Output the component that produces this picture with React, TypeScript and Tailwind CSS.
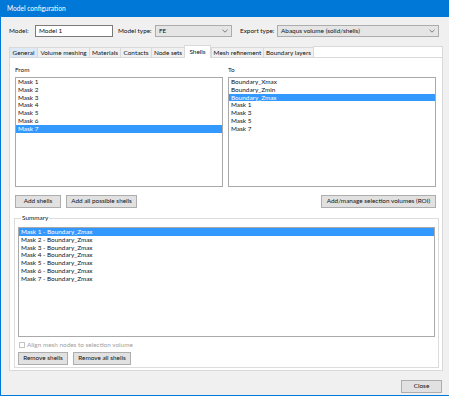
const fromItems = ['Mask 1', 'Mask 2', 'Mask 3', 'Mask 4', 'Mask 5', 'Mask 6', 'Mask 7'];
const toItems = ['Boundary_Xmax', 'Boundary_Zmin', 'Boundary_Zmax', 'Mask 1', 'Mask 3', 'Mask 5', 'Mask 7'];
const summaryItems = [1, 2, 3, 4, 5, 6, 7].map((n) => `Mask ${n} - Boundary_Zmax`);

const tabs = [
  { label: 'General', w: 'w-[28px]' },
  { label: 'Volume meshing', w: 'w-[52px]' },
  { label: 'Materials', w: 'w-[31px]' },
  { label: 'Contacts', w: 'w-[31px]' },
  { label: 'Node sets', w: 'w-[33px]' },
  { label: 'Shells', w: 'w-[27px]' },
  { label: 'Mesh refinement', w: 'w-[52px]' },
  { label: 'Boundary layers', w: 'w-[50px]' }
];

function Chevron() {
  return (
    <svg width="6" height="4" viewBox="0 0 6 4" className="shrink-0">
      <polyline points="0.5,0.8 3,3.2 5.5,0.8" fill="none" stroke="#606060" strokeWidth="0.8" />
    </svg>
  );
}

function ListBox({ items, selected, className }: { items: string[]; selected: number; className: string }) {
  return (
    <div className={`bg-white border border-[#a9a9a9] overflow-hidden ${className}`}>
      {items.map((item, index) => (
        <div
          key={index}
          className={`h-[7.8px] leading-[7.8px] pl-[2px] whitespace-nowrap ${index === selected ? 'bg-[#3399ff] text-white' : 'text-[#111]'}`}
        >
          {item}
        </div>
      ))}
    </div>
  );
}

function Button({ label, className }: { label: string; className: string }) {
  return (
    <button className={`h-[13px] bg-[#e1e1e1] border border-[#adadad] text-[#111] leading-none flex items-center justify-center whitespace-nowrap ${className}`}>
      {label}
    </button>
  );
}

export default function App() {
  return (
    <div className="w-[449px] h-[398px] bg-white font-['Lato',sans-serif] text-[6.4px] text-[#111]">
      <div className="h-[396px] bg-[#f0f0f0] border-l border-b border-[#0078d7] flex flex-col">
        {/* title bar */}
        <div className="h-[17px] bg-[#0078d7] text-white text-[6.6px] flex items-center pl-[6px]">Model configuration</div>

        {/* model row */}
        <div className="flex items-center h-[12px] mt-[8px]">
          <span className="ml-[8px] w-[26px]">Model:</span>
          <div className="w-[78px] h-[12px] bg-white border border-[#7a7a7a] flex items-center pl-[3px]">Model 1</div>
          <span className="ml-[5px] w-[37px]">Model type:</span>
          <div className="w-[77px] h-[12px] bg-[#e5e5e5] border border-[#acacac] flex items-center justify-between pl-[3px] pr-[3px]">
            <span>FE</span>
            <Chevron />
          </div>
          <span className="ml-[8px] w-[37px]">Export type:</span>
          <div className="w-[162px] h-[12px] bg-[#e5e5e5] border border-[#acacac] flex items-center justify-between pl-[3px] pr-[3px]">
            <span>Abaqus volume (solid/shells)</span>
            <Chevron />
          </div>
        </div>

        {/* tabs */}
        <div className="flex items-end h-[12px] mt-[8px] ml-[8px] w-[434px]">
          {tabs.map((tab) =>
            tab.label === 'Shells' ? (
              <div
                key={tab.label}
                className={`${tab.w} h-[13px] -mb-px relative z-10 bg-white border border-b-0 border-[#d9d9d9] flex items-center justify-center whitespace-nowrap`}
              >
                {tab.label}
              </div>
            ) : (
              <div
                key={tab.label}
                className={`${tab.w} h-[10px] border border-b-0 border-r-0 border-[#d9d9d9] flex items-center justify-center whitespace-nowrap ${tab.label === 'General' ? 'bg-[#dde9f5]' : 'bg-[#f0f0f0]'}`}
              >
                {tab.label}
              </div>
            )
          )}
          <div className="flex-1 h-[11px] bg-white border-t border-r border-l border-[#d9d9d9]"></div>
        </div>

        {/* tab page */}
        <div className="ml-[8px] w-[434px] h-[314px] bg-white border border-[#d9d9d9] flex flex-col px-[5px] pt-[8px]">
          <div className="flex gap-[5px]">
            <div className="flex flex-col">
              <span className="leading-[8px] h-[8px] mb-[3px]">From</span>
              <ListBox items={fromItems} selected={6} className="w-[208px] h-[110px]" />
            </div>
            <div className="flex flex-col">
              <span className="leading-[8px] h-[8px] mb-[3px]">To</span>
              <ListBox items={toItems} selected={2} className="w-[208px] h-[110px]" />
            </div>
          </div>

          <div className="flex mt-[8px]">
            <Button label="Add shells" className="w-[46px]" />
            <Button label="Add all possible shells" className="w-[71px] ml-[5px]" />
            <Button label="Add/manage selection volumes (ROI)" className="w-[115px] ml-auto mr-[1px]" />
          </div>

          <fieldset className="mt-[6px] -ml-px w-[425px] border border-[#dcdcdc] px-[3px] pt-[5px] pb-[2px]">
            <legend className="ml-[3px] px-[1px] leading-[8px] h-[8px]">Summary</legend>
            <ListBox items={summaryItems} selected={0} className="w-[417px] h-[110px]" />
            <div className="flex items-center h-[7px] mt-[4px] text-[#a0a0a0]">
              <div className="w-[6px] h-[6px] border border-[#c4c4c4] bg-white ml-[1px]"></div>
              <span className="ml-[2px]">Align mesh nodes to selection volume</span>
            </div>
            <div className="flex mt-[4px]">
              <Button label="Remove shells" className="w-[50px]" />
              <Button label="Remove all shells" className="w-[58px] ml-[5px]" />
            </div>
          </fieldset>
        </div>

        {/* footer */}
        <div className="flex justify-end mt-[9px] w-[441px]">
          <Button label="Close" className="w-[41px] h-[12px] border-[#0078d7]" />
        </div>
      </div>
    </div>
  );
}
